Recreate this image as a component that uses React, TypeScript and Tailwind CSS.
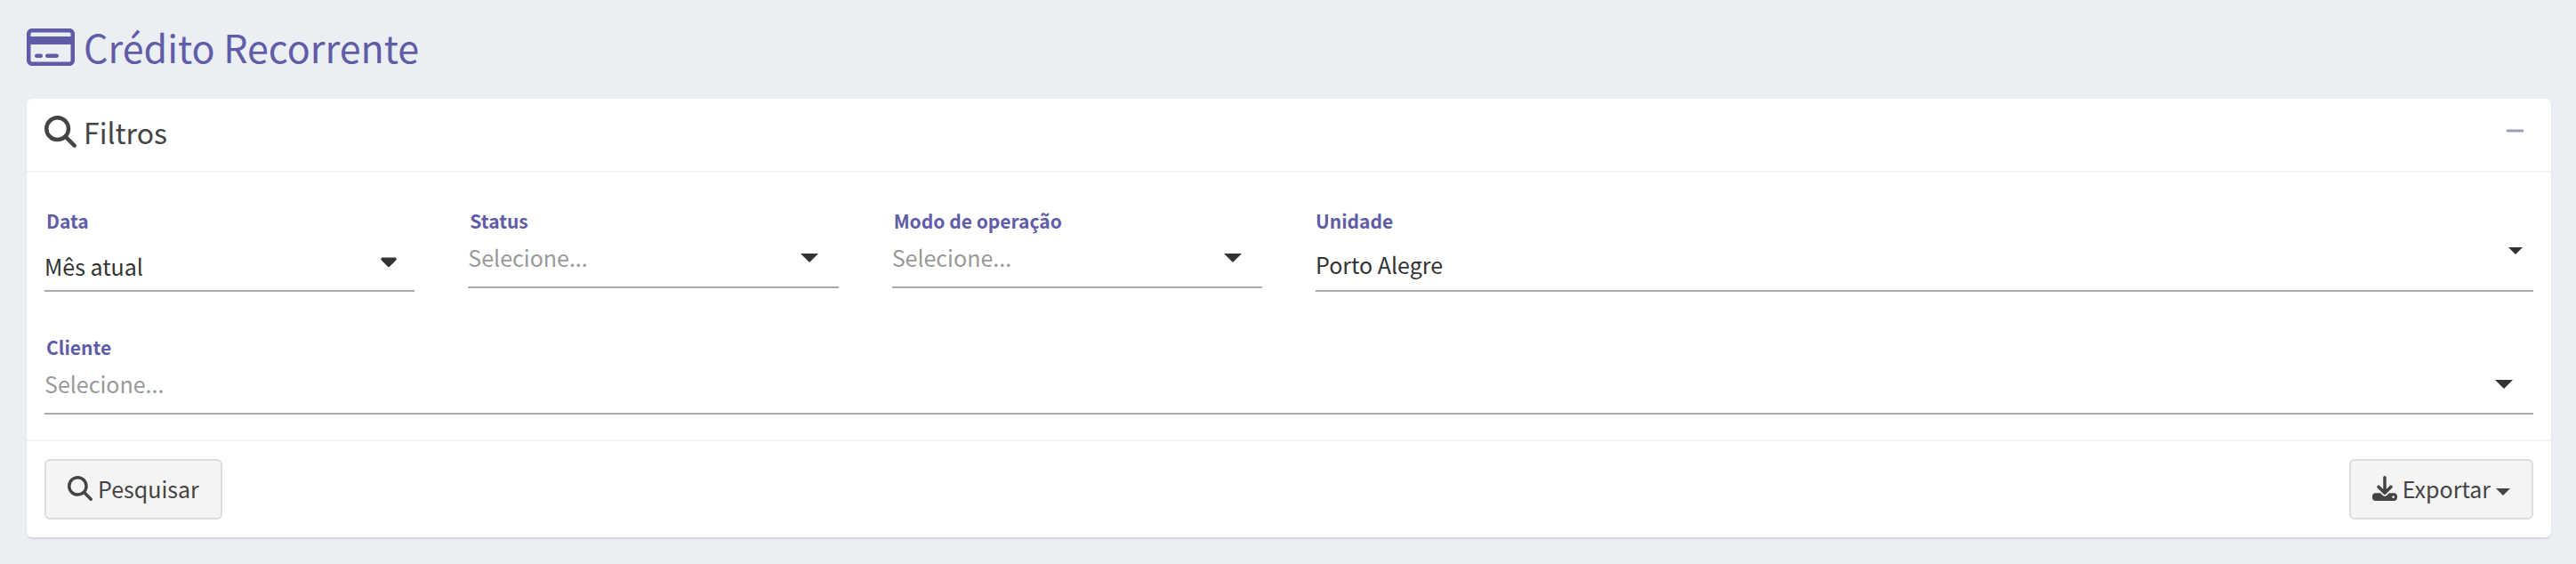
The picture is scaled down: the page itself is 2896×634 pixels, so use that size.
import React from "react";
import {
  FaCaretDown,
  FaDownload,
  FaMagnifyingGlass,
  FaMinus,
  FaRegCreditCard,
} from "react-icons/fa6";

type FieldProps = {
  id: string;
  label: string;
  labelClass?: string;
  className?: string;
  selectClass: string;
  options: string[];
  caret: React.ReactNode;
};

function Field({ id, label, labelClass = "pl-0.5", className = "", selectClass, options, caret }: FieldProps) {
  return (
    <div className={className}>
      <label htmlFor={id} className={`block text-[21px] leading-[30px] font-bold text-[#605ca8] ${labelClass}`}>
        {label}
      </label>
      <div className="relative">
        <select
          id={id}
          className={`block w-full appearance-none border-b-2 border-[#aaa] bg-transparent text-[25px] leading-9 outline-none ${selectClass}`}
        >
          {options.map((o) => (
            <option key={o}>{o}</option>
          ))}
        </select>
        {caret}
      </div>
    </div>
  );
}

const emptySelect = "h-[61px] pb-[7px] text-[#999]";

const wideCaret = (
  <span className="pointer-events-none absolute top-[22px] right-[23px] border-x-10 border-t-10 border-x-transparent border-t-[#333]" />
);

const buttonClass =
  "flex items-center gap-1.5 rounded-md border-2 border-[#ddd] bg-[#f4f4f4] px-6 pt-[13px] pb-[15px] text-[25px] leading-9";

export default function App() {
  return (
    <main className="min-h-screen bg-[#ebeff4] pt-[22px] pr-7 pb-[30px] pl-[30px] font-['Noto_Sans_CJK_SC',sans-serif] text-[#444]">
      <h1 className="flex items-center gap-2.5 pb-[29px] text-[43px] leading-[60px] text-[#605ca8]">
        <FaRegCreditCard className="mt-0.5 h-12 w-[54px]" />
        Crédito Recorrente
      </h1>

      <section className="rounded-md bg-white shadow-[0_2px_2px_rgba(0,0,0,0.1)]">
        <header className="flex items-center justify-between border-b-2 border-[#f4f4f4] pt-[17px] pr-[30px] pb-6 pl-5">
          <h2 className="flex items-center gap-2 text-[32px] leading-10">
            <FaMagnifyingGlass className="size-9" />
            Filtros
          </h2>
          <button type="button" aria-label="Recolher" className="mb-0.5 text-[#97a0b3]">
            <FaMinus className="h-6 w-[21px]" />
          </button>
        </header>

        <form onSubmit={(e) => e.preventDefault()}>
          <div className="grid grid-cols-6 gap-x-[60px] gap-y-[47px] px-5 pt-[39px] pb-7">
            <Field
              id="data"
              label="Data"
              selectClass="h-[65px] pt-[9px] text-[#333]"
              options={["Mês atual"]}
              caret={
                <FaCaretDown className="pointer-events-none absolute top-4 right-5 h-7 w-[18px] text-[#333]" />
              }
            />
            <Field id="status" label="Status" selectClass={emptySelect} options={["Selecione..."]} caret={wideCaret} />
            <Field
              id="modo"
              label="Modo de operação"
              selectClass={emptySelect}
              options={["Selecione..."]}
              caret={wideCaret}
            />
            <Field
              id="unidade"
              label="Unidade"
              labelClass="pl-0"
              className="col-span-3"
              selectClass="h-[65px] pt-[5px] text-[#333]"
              options={["Porto Alegre"]}
              caret={
                <span className="pointer-events-none absolute top-[15px] right-3 border-x-8 border-t-8 border-x-transparent border-t-[#333]" />
              }
            />
            <Field
              id="cliente"
              label="Cliente"
              className="col-span-6"
              selectClass={emptySelect}
              options={["Selecione..."]}
              caret={wideCaret}
            />
          </div>

          <footer className="flex justify-between border-t-2 border-[#f4f4f4] p-5">
            <button type="submit" className={buttonClass}>
              <FaMagnifyingGlass className="size-7" />
              Pesquisar
            </button>
            <button type="button" className={buttonClass}>
              <FaDownload className="size-7" />
              Exportar
              <span className="mt-2 border-x-8 border-t-8 border-x-transparent border-t-[#444]" />
            </button>
          </footer>
        </form>
      </section>
    </main>
  );
}
